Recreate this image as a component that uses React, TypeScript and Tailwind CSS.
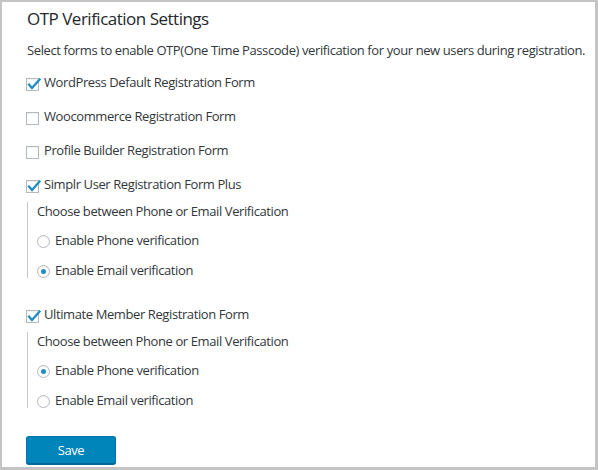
import React from "react";

function Checkbox({ checked }: { checked: boolean }) {
  return (
    <span className="relative inline-block w-[13px] h-[13px] shrink-0 border border-[#b4b9be] bg-white shadow-[inset_0_1px_2px_rgba(0,0,0,0.07)] mt-[3px]">
      {checked && (
        <svg
          className="absolute left-[0px] top-[-2px]"
          width="14"
          height="14"
          viewBox="0 0 14 14"
        >
          <path
            d="M2 7.5 L5 11 L12.5 2.5"
            fill="none"
            stroke="#1e8cbe"
            strokeWidth="2.2"
            strokeLinecap="square"
          />
        </svg>
      )}
    </span>
  );
}

function Radio({ checked }: { checked: boolean }) {
  return (
    <span className="relative flex items-center justify-center w-[13px] h-[13px] shrink-0 rounded-full border border-[#b4b9be] bg-white shadow-[inset_0_1px_2px_rgba(0,0,0,0.07)]">
      {checked && <span className="w-[5px] h-[5px] rounded-full bg-[#1e8cbe]" />}
    </span>
  );
}

function CheckRow({ label, checked }: { label: string; checked: boolean }) {
  return (
    <div className="h-[34px] flex items-center gap-[5px] -ml-[1px]">
      <Checkbox checked={checked} />
      <span>{label}</span>
    </div>
  );
}

function SubBlock({ phone }: { phone: boolean }) {
  return (
    <div className="border-l border-[#c8c8c8] pl-[9px] flex flex-col">
      <div className="h-[20px] flex items-center">Choose between Phone or Email Verification</div>
      <div className="mt-[12px] h-[14px] flex items-center gap-[5px]">
        <Radio checked={phone} />
        <span>Enable Phone verification</span>
      </div>
      <div className="mt-[16px] h-[14px] flex items-center gap-[5px]">
        <Radio checked={!phone} />
        <span>Enable Email verification</span>
      </div>
    </div>
  );
}

export default function App() {
  return (
    <div
      className="w-[598px] h-[470px] bg-white border-l-2 border-t-2 border-r-[3px] border-b-[3px] border-[#c4c4c4] pl-[25px] pt-[5px] text-[13px] tracking-[-0.4px] text-[#32373c] overflow-hidden"
      style={{ fontFamily: '"Open Sans", sans-serif' }}
    >
      <h2 className="text-[17px] leading-[24px] tracking-[-0.5px] text-[#23282d] font-normal">OTP Verification Settings</h2>
      <p className="mt-[9px] leading-[20px] whitespace-nowrap">
        Select forms to enable OTP(One Time Passcode) verification for your new users during registration.
      </p>
      <div className="mt-[6px]">
        <CheckRow label="WordPress Default Registration Form" checked />
        <CheckRow label="Woocommerce Registration Form" checked={false} />
        <CheckRow label="Profile Builder Registration Form" checked={false} />
        <CheckRow label="Simplr User Registration Form Plus" checked />
        <SubBlock phone={false} />
        <div className="mt-[20px]">
          <CheckRow label="Ultimate Member Registration Form" checked />
        </div>
        <SubBlock phone />
      </div>
      <button className="mt-[28px] w-[90px] h-[28px] -ml-[1px] rounded-[3px] bg-[#0085ba] border border-[#0073aa] border-b-[#006799] text-white text-[13px] leading-[26px] shadow-[0_1px_0_#006799]">
        Save
      </button>
    </div>
  );
}
